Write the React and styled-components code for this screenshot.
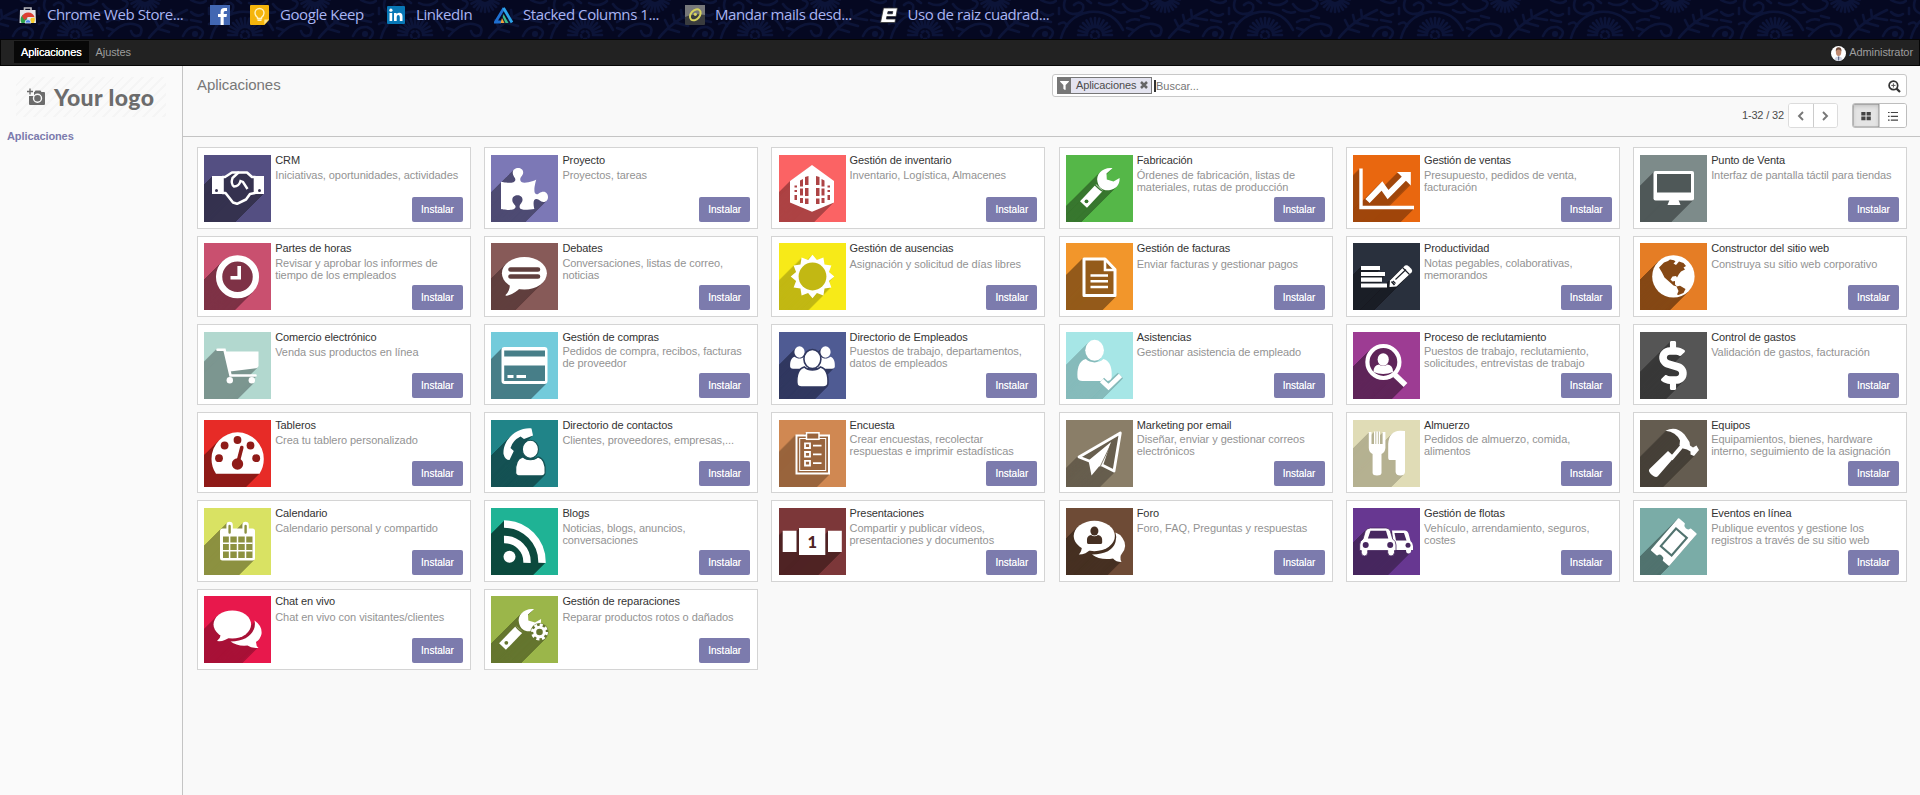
import React from "react";
import styled, { createGlobalStyle } from "styled-components";
import { FaPuzzlePiece, FaDollarSign, FaFilter } from "react-icons/fa";

const GlobalStyle = createGlobalStyle`
  * { box-sizing: border-box; }
  html, body { margin: 0; height: 100%; overflow: hidden; }
  body { background: #f9f9f9; font-family: "Liberation Sans", Arial, sans-serif; font-size: 11px; color: #4c4c4c; }
`;

const Page = styled.div`
  display: flex;
  flex-direction: column;
  height: 795px;
  overflow: hidden;
`;

/* ---------- bookmarks ---------- */
const BookmarkBar = styled.div`
  position: relative;
  height: 39px;
  flex: none;
  background: #050821;
  overflow: hidden;
`;
const Backdrop = styled.svg`
  position: absolute;
  inset: 0;
  width: 100%;
  height: 39px;
`;
const BookmarkList = styled.div`
  position: relative;
  display: flex;
  align-items: center;
  height: 30px;
  padding-left: 18px;
`;
const Bookmark = styled.div`
  display: flex;
  align-items: center;
  flex: none;
  width: ${(p) => p.$width}px;
  height: 30px;
`;
const BookmarkIcon = styled.svg`
  width: 20px;
  height: 20px;
  margin-right: ${(p) => p.$gap}px;
  flex: none;
`;
const BookmarkLabel = styled.span`
  font-family: "Open Sans", "Noto Sans", sans-serif;
  font-size: 15px;
  line-height: 20px;
  margin-top: -3px;
  letter-spacing: -0.42px;
  color: #a9b5f3;
  white-space: nowrap;
`;

/* ---------- navigation ---------- */
const NavBar = styled.nav`
  display: flex;
  align-items: center;
  flex: none;
  height: 27px;
  padding: 0 6px 0 13px;
  background: #222;
  border: 1px solid #050505;
`;
const NavItem = styled.a`
  height: 22px;
  line-height: 22px;
  padding: 0 7px;
  margin-top: -1px;
  letter-spacing: -0.1px;
  color: ${(p) => (p.$active ? "#fff" : "#9d9d9d")};
  background: ${(p) => (p.$active ? "#080808" : "transparent")};
  text-shadow: ${(p) => (p.$active ? "0 0 0.6px #fff" : "none")};
`;
const UserMenu = styled.div`
  display: flex;
  align-items: center;
  gap: 3px;
  margin-left: auto;
  color: #9d9d9d;
`;
const Avatar = styled.svg`
  width: 15px;
  height: 15px;
  margin-top: 1px;
`;
const UserName = styled.span`
  line-height: 22px;
  margin-top: -2px;
  letter-spacing: -0.08px;
`;

/* ---------- layout ---------- */
const Body = styled.div`
  display: flex;
  flex: 1;
  min-height: 0;
`;
const Sidebar = styled.aside`
  width: 183px;
  flex: none;
  border-right: 1px solid #c4c4c4;
  background: #fafafa;
`;
const LogoBox = styled.div`
  display: flex;
  align-items: center;
  width: 150px;
  height: 40px;
  margin: 11px 0 0 16px;
  padding-left: 11px;
  background: repeating-linear-gradient(135deg, #fafafa 0 5px, #f5f5f5 5px 7px);
`;
const LogoText = styled.span`
  font-family: Lato, sans-serif;
  font-weight: 900;
  font-size: 23px;
  letter-spacing: 0.4px;
  line-height: 28px;
  color: #6c6c6c;
  margin: 0 0 1px 8px;
  white-space: nowrap;
`;
const SideTitle = styled.div`
  margin: 12px 0 0 7px;
  line-height: 14px;
  font-weight: bold;
  letter-spacing: -0.1px;
  color: #7c7bad;
`;
const Main = styled.main`
  flex: 1;
  min-width: 0;
`;
const ControlPanel = styled.header`
  display: flex;
  justify-content: space-between;
  height: 71px;
  padding: 8px 13px 0 14px;
  border-bottom: 1px solid #c4c4c4;
`;
const Heading = styled.h1`
  margin: 2px 0 0;
  font-size: 15px;
  line-height: 18px;
  font-weight: normal;
  letter-spacing: -0.05px;
  color: #777;
`;
const Tools = styled.div`
  width: 855px;
`;
const SearchBox = styled.div`
  display: flex;
  align-items: center;
  height: 23px;
  padding: 0 4px;
  border: 1px solid #c8c8c8;
  border-radius: 3px;
  background: #fff;
`;
const Facet = styled.div`
  display: flex;
  align-items: center;
  height: 17px;
  margin-top: -1px;
  border: 1px solid #777;
  background: #e4e4f0;
  color: #4c4c4c;
`;
const FacetIcon = styled.span`
  display: flex;
  align-items: center;
  justify-content: center;
  width: 13px;
  height: 15px;
  margin-right: 5px;
  background: #777;
  color: #fff;
`;
const FacetLabel = styled.span`
  line-height: 15px;
  width: 63px;
  letter-spacing: -0.12px;
  white-space: nowrap;
`;
const FacetClose = styled.svg`
  width: 8px;
  height: 8px;
  margin: 0 3px 0 1px;
`;
const SearchInput = styled.span`
  flex: 1;
  margin-left: 2px;
  border-left: 2px solid #333;
  height: 12px;
  line-height: 13px;
  color: #777;
`;
const ZoomIcon = styled.svg`
  width: 13px;
  height: 13px;
  margin: 1px 1px 0 0;
`;
const PagerRow = styled.div`
  display: flex;
  align-items: center;
  justify-content: flex-end;
  margin-top: 6px;
  height: 25px;
`;
const PagerText = styled.span`
  margin: -1px 4px 0 0;
  letter-spacing: -0.15px;
`;
const ButtonGroup = styled.div`
  display: flex;
  height: 25px;
  margin-left: ${(p) => p.$gap || 0}px;
  border: 1px solid ${(p) => p.$tone};
  border-radius: 3px;
  background: #fff;
  overflow: hidden;
`;
const ToolButton = styled.button`
  display: flex;
  align-items: center;
  justify-content: center;
  width: ${(p) => p.$width}px;
  padding: 0;
  border: 0;
  border-left: ${(p) => (p.$divided ? "1px solid #ccc" : "0")};
  background: ${(p) => (p.$active ? "#e4e4e4" : "#fff")};
  box-shadow: ${(p) => (p.$active ? "inset 0 2px 4px rgba(0,0,0,.16), inset 0 0 0 0.5px #999" : "none")};
`;
const ToolGlyph = styled.svg`
  width: 12px;
  height: 12px;
`;

/* ---------- app cards ---------- */
const CardGrid = styled.section`
  display: grid;
  grid-template-columns: repeat(6, 274px);
  grid-auto-rows: 81.3px;
  column-gap: 13.2px;
  row-gap: 6.95px;
  padding: 10.45px 0 0 14px;
`;
const Card = styled.article`
  display: flex;
  border: 1px solid #d4d4d4;
  background: #fff;
  padding: 6.6px 7px 0 6.2px;
`;
const Tile = styled.svg`
  width: 67px;
  height: 67px;
  flex: none;
`;
const Info = styled.div`
  display: flex;
  flex-direction: column;
  flex: 1;
  min-width: 0;
  padding-left: 4px;
  height: 66.6px;
`;
const AppName = styled.div`
  font-size: 11px;
  line-height: 13px;
  letter-spacing: -0.1px;
  margin-top: -1px;
  color: #333;
  white-space: nowrap;
`;
const AppSummary = styled.div`
  font-size: 11px;
  line-height: 12px;
  letter-spacing: -0.06px;
  margin-top: ${(p) => (p.$wrapped ? 1.6 : 2.4)}px;
  color: #939393;
  white-space: pre;
`;
const InstallButton = styled.button`
  align-self: flex-end;
  margin-top: auto;
  width: 51px;
  height: 25px;
  padding: 0;
  border: 0;
  border-radius: 2px;
  background: #7c7bad;
  color: #fff;
  font: 10px/25px "Liberation Sans", Arial, sans-serif;
  text-shadow: 0 0 0.5px rgba(255, 255, 255, 0.7);
`;

/* ---------- glyphs, drawn in a 67 x 67 box; d is the dark cut-out colour ---------- */
const person = (x, y, s) => (
  <g transform={`translate(${x} ${y}) scale(${s})`}>
    <ellipse cx="0" cy="-10" rx="8.5" ry="9.5" />
    <path d="M-8 -2 C-15 0 -16 8 -15.5 15 Q-15 18 -11 18 H11 Q15 18 15.5 15 C16 8 15 0 8 -2 C4 2 -4 2 -8 -2Z" />
  </g>
);
const wrenchHead = "M46.5 13.2 C37 12 29.5 19 31.5 27 C33 33.5 38 36 43 35.2 C49 34.5 54 30.5 53.6 23 L47.5 26.5 L40.8 24.5 L40.5 18.5 Z";

const glyphs = {
  crm: (d) => (
    <>
      <path d="M18.5 22 H21 L28 17.5 H43 L48 22 H51 V38 L46 39 L42 44.5 L33 48.8 L29 47.5 L21.5 38 H18.5Z" fill={d} stroke="currentColor" strokeWidth="2.6" strokeLinejoin="round" />
      <path d="M8 21 H18.5 V39 H8Z M51 21 H60 V39 H51Z" />
      <path d="M35 17 L28.5 23 Q26.5 29 30 31.5 Q35 31.5 36.5 26 L39 27 L43.5 34" fill="none" stroke="currentColor" strokeWidth="2.4" />
      <circle cx="12.5" cy="35.5" r="1.5" fill={d} />
      <circle cx="55.5" cy="35.5" r="1.5" fill={d} />
    </>
  ),
  puzzle: () => <FaPuzzlePiece x="10" y="10.5" size={47} />,
  stock: (d) => (
    <>
      <path d="M33 10 L55 26 V47.5 L33 56.7 L11 47.5 V26Z" />
      <path d="M26 22 L29.5 21 V30 H26Z M37 21 L40.5 22 V30 H37Z M21 25.5 L24 24 V31.5 H21Z M42.5 24 L45.5 25.5 V31.5 H42.5Z M26 33 H29.5 V41 H26Z M37 33 H40.5 V41 H37Z M21 33.5 H24 V40.5 H21Z M42.5 33.5 H45.5 V40.5 H42.5Z M26 43.5 H29.5 V49 H26Z M37 43.5 H40.5 V49 H37Z M21 43 H24 V48 H21Z M42.5 43 H45.5 V48 H42.5Z M15.5 30.5 H18 V32.5 H15.5Z M15.5 35 H18 V37 H15.5Z M15.5 40 H18 V45 H15.5Z M48.5 30.5 H51 V32.5 H48.5Z M48.5 35 H51 V37 H48.5Z M48.5 40 H51 V45 H48.5Z" fill={d} />
    </>
  ),
  wrench: (d) => (
    <>
      <path d={wrenchHead} />
      <path d="M17.5 49.5 L33.5 32.5" stroke="currentColor" strokeWidth="9.5" strokeLinejoin="round" />
      <path d="M28.5 29.5 Q34 35 37 36.5" fill="none" stroke={d} strokeWidth="1.3" />
      <circle cx="20.5" cy="46.3" r="1.9" fill={d} />
    </>
  ),
  sales: () => (
    <>
      <path d="M8 13.5 V52.5 H61" fill="none" stroke="currentColor" strokeWidth="3.4" />
      <path d="M14.5 46 L29 31 L35 39.5 L52 22.5" fill="none" stroke="currentColor" strokeWidth="6" />
      <path d="M44 17 H57.8 V30.5Z" />
    </>
  ),
  monitor: (d) => (
    <>
      <rect x="13.5" y="16" width="40.5" height="29.5" rx="2" />
      <path d="M29.5 45 H38.5 L40.5 50 H27.5Z" />
      <rect x="17" y="19" width="34" height="18.5" fill={d} />
    </>
  ),
  clock: (d) => (
    <>
      <circle cx="33.5" cy="33.7" r="18.4" fill={d} stroke="currentColor" strokeWidth="6.3" />
      <path d="M35.2 23 V34.8 H26.5" fill="none" stroke="currentColor" strokeWidth="3.6" />
    </>
  ),
  talk: (d) => (
    <>
      <ellipse cx="33.4" cy="30.2" rx="22.5" ry="16.2" />
      <path d="M19 41 Q19 48 14.5 52 Q14 53 16 52.8 Q25 50 30 44Z" />
      <path d="M19.5 26.5 H47 M19.5 33.5 H47" stroke={d} strokeWidth="4.6" strokeLinecap="round" />
    </>
  ),
  sun: (d) => {
    const pts = [];
    for (let i = 0; i < 24; i++) {
      const r = i % 2 ? 17 : 21.8;
      const a = (i * Math.PI) / 12;
      pts.push(`${(33.5 + r * Math.sin(a)).toFixed(2)},${(33.5 - r * Math.cos(a)).toFixed(2)}`);
    }
    return (
      <>
        <polygon points={pts.join(" ")} />
        <circle cx="33.5" cy="33.5" r="13.9" fill={d} />
      </>
    );
  },
  invoice: (d) => (
    <>
      <path d="M18 16 H39 L49 26.5 V52.5 H18Z" fill={d} stroke="currentColor" strokeWidth="3" strokeLinejoin="round" />
      <path d="M39 16 V27 H49" fill="none" stroke="currentColor" strokeWidth="2.6" />
      <path d="M24.5 32.5 H42 M24.5 38.2 H42 M24.5 44 H42" stroke="currentColor" strokeWidth="2.6" />
    </>
  ),
  notes: (d) => (
    <>
      <path d="M8 25 H27 M8 31 H32 M8 36.7 H29 M8 42.5 H34" stroke="currentColor" strokeWidth="4.2" />
      <path d="M36.5 44 L37 37.5 L52 22.5 Q54 21.5 56 23.5 L58.5 26 Q60 28 58.5 29.5 L43.5 43.5Z" />
      <path d="M49.5 24.5 L56.5 31.5 M40 38 L42.5 40.5 M42.5 36.5 L53 26.5" stroke={d} strokeWidth="1.1" />
      <path d="M38.5 38.5 L41.5 42" stroke={d} strokeWidth="1.6" />
    </>
  ),
  globe: (d) => (
    <>
      <circle cx="33.4" cy="33.4" r="21.2" />
      <path d="M19 24.5 L24 19.5 L28 18 L30 16.5 L34 17.2 L35.5 18.5 L33.5 20.5 L36 22 L39 18.5 L43.5 20 L46 23 L43.5 24.5 L45 26.5 L41 28.5 L39 31 L37 34.5 L36 33 L32.5 33.5 L30.5 36.5 L32.5 38.5 L35 38 L35 41.5 L37 43.5 L33.5 42.5 L29 38.5 L24.5 34.5 L22 29.5 L20.5 27Z M36.5 43.5 L40 42.8 L45.5 46 L43.5 50 L38.5 52 L37 51.5 L38.5 48Z" fill={d} />
    </>
  ),
  cart: () => (
    <>
      <path d="M13.5 17.8 H20.5 L26.5 43.5 H51.5" fill="none" stroke="currentColor" strokeWidth="2.6" strokeLinecap="round" />
      <path d="M21 19.5 H54.5 V34 Q54 36 52 36.3 L26 39.5Z" />
      <circle cx="25.8" cy="48.3" r="3.2" />
      <circle cx="47.8" cy="48.3" r="3.2" />
    </>
  ),
  card: (d) => (
    <>
      <rect x="10.5" y="15" width="46" height="37" rx="3" />
      <path d="M13.2 18.5 H54 V24.5 H13.2Z M13.2 33.5 H54 V49 H13.2Z" fill={d} />
      <path d="M16.5 44.5 H22.5 M25.5 44.5 H35" stroke="currentColor" strokeWidth="3" />
    </>
  ),
  team: (d) => (
    <>
      {person(20.5, 26, 0.6)}
      {person(46.5, 26, 0.6)}
      <g stroke={d} strokeWidth="1.6">{person(33.4, 37, 1)}</g>
    </>
  ),
  attend: (d) => (
    <>
      {person(28.6, 29.3, 1.1)}
      <path d="M35.5 48.5 L42.5 55 L54.5 43.5" fill="none" stroke={d} strokeWidth="7.5" />
      <path d="M35.5 48.5 L42.5 55 L54.5 43.5" fill="none" stroke="currentColor" strokeWidth="4.6" />
    </>
  ),
  recruit: (d) => (
    <>
      <circle cx="30.4" cy="30" r="16" fill={d} stroke="currentColor" strokeWidth="4.2" />
      <ellipse cx="30.2" cy="27.5" rx="5.6" ry="6.3" />
      <path d="M20.5 40 Q20.5 33 26 32.5 Q30 35.5 34.5 32.5 Q40 33 40 40 Q30 44 20.5 40Z" />
      <path d="M42 43 L52.5 53" stroke="currentColor" strokeWidth="5.5" />
    </>
  ),
  dollar: () => <FaDollarSign x="8.5" y="9" size={49} />,
  gauge: (d) => (
    <>
      <path d="M12 53.7 Q7.5 47 7.5 39 A26 26.5 0 0 1 59.8 39 Q59.8 47 55.5 53.7Z" />
      <g fill={d}>
        <circle cx="33.5" cy="20" r="3.9" />
        <circle cx="20.6" cy="25.5" r="3.9" />
        <circle cx="46.5" cy="25.5" r="3.9" />
        <circle cx="15" cy="38.2" r="3.9" />
        <circle cx="52.2" cy="38.2" r="3.9" />
        <circle cx="33.5" cy="44" r="5.7" />
      </g>
      <path d="M33.8 43 L37.8 27.5" stroke={d} strokeWidth="3.6" strokeLinecap="round" />
    </>
  ),
  contact: (d) => (
    <>
      <path d="M40.5 8.5 C27 7 11.5 19 12.5 34 Q14 40 18.5 40 L22.8 31 L19.5 28 Q21.5 20.5 29.5 16.5 L33 19 L42 15.5Z" />
      <g stroke={d} strokeWidth="1.2">{person(39.4, 38.8, 0.95)}</g>
    </>
  ),
  survey: (d) => (
    <>
      <rect x="17.5" y="15.5" width="32.5" height="38" fill={d} stroke="currentColor" strokeWidth="2" />
      <rect x="20.7" y="18.5" width="26" height="32" fill="none" stroke="currentColor" strokeWidth="1" />
      <rect x="27.5" y="12.8" width="12.5" height="6.5" fill={d} stroke="currentColor" strokeWidth="1.5" />
      <g fill="none" stroke="currentColor" strokeWidth="1.8">
        <path d="M26 23.3 H31 V28 H26Z M26 32 H31 V36.7 H26Z M26 40.8 H31 V45.5 H26Z M34 25.7 H42.5 M34 34.3 H42.5 M34 43.2 H42.5" />
      </g>
    </>
  ),
  plane: (d) => (
    <>
      <path d="M54.3 13 L13 37 L24.5 41.5 L37 45.5 L48 51Z" fill={d} stroke="currentColor" strokeWidth="2.8" strokeLinejoin="round" />
      <path d="M45 22 L22.5 40.5 L25.5 55.5 L33 46.5 L37 45.5Z" />
      <path d="M45 24 L34.5 46" stroke={d} strokeWidth="0.8" />
    </>
  ),
  meal: (d) => (
    <>
      <path d="M15.8 12 H18.5 V24 H21 V11.5 H27 V24 H29.6 V12 H32.4 V28 Q32 32.5 28.5 34 V53 Q28.3 55.5 24 55.5 Q19.8 55.5 19.6 53 V34 Q16 32.5 15.8 28Z" />
      <path d="M22.8 11.5 V24 M25.4 11.5 V24" stroke={d} strokeWidth="0.8" />
      <path d="M52 11 V52 Q51.6 55.5 47.5 55.5 Q43 55.5 42.6 52 V40 H36.5 Q35 40 35.2 36 V24 Q36 11 47 10.8Z" />
    </>
  ),
  hammer: () => (
    <>
      <path d="M25.5 10.8 Q36 5.5 44.5 14.5 L49.5 22 L50 25.5 L53 27.5 L56.5 25.5 L59 30 L54 36 L50.5 34.5 L50.5 31.5 L47 29.5 L43 28.5 L39.5 25 L40 20.5 Q36 12 25.5 10.8Z" />
      <path d="M42 26 L31 39" stroke="currentColor" strokeWidth="4" />
      <path d="M28 31 L34.5 37 L18 56 Q16 58.5 12 55 Q7.5 51 9.5 49Z" />
    </>
  ),
  calendar: (d) => (
    <>
      <rect x="16" y="20.5" width="35" height="32" rx="2.5" />
      <path d="M25.6 17 V26 M41.6 17 V26" stroke="currentColor" strokeWidth="6.4" strokeLinecap="round" />
      <path d="M25.6 18 V24.5 M41.6 18 V24.5" stroke={d} strokeWidth="2.4" strokeLinecap="round" />
      <path d="M19 28.5 H48.5 V50 H19Z" fill={d} />
      <path d="M19 35.2 H48.5 M19 42.8 H48.5 M25.6 28 V50.5 M33.5 28 V50.5 M41.5 28 V50.5" stroke="currentColor" strokeWidth="1.5" />
    </>
  ),
  rss: () => (
    <>
      <circle cx="18.5" cy="48.8" r="6" />
      <path d="M13 31.5 A22.5 22.5 0 0 1 36 54.8 M13 16 A38 38 0 0 1 51 54.8" fill="none" stroke="currentColor" strokeWidth="7.4" />
    </>
  ),
  slides: (d) => (
    <>
      <path d="M3.7 22.7 H17.5 V44 H3.7Z M20 20 H46.3 V47 H20Z M49 22.7 H62.8 V44 H49Z" />
      <text x="33.3" y="39.5" textAnchor="middle" fontFamily="Lato, sans-serif" fontWeight="900" fontSize="16.5" fill={d}>1</text>
    </>
  ),
  forum: (d) => (
    <>
      <path d="M56.5 30 Q62 38 56 45.5 Q53 49 55.5 54 Q50 54 47 50.5 Q34 52.5 26 46.5 Q46 46 49.5 34 Q51 29 49.5 24.5 Q54 26 56.5 30Z" />
      <ellipse cx="28.3" cy="28" rx="20.6" ry="15.2" />
      <path d="M16 38 Q16 43 12.8 46.5 Q20 46.5 25 41Z" />
      <g fill={d}>
        <ellipse cx="28.4" cy="23" rx="4" ry="4.6" />
        <path d="M21 34.5 Q20 27.5 25 27 Q28.4 29.5 32 27 Q37 27.5 36.2 34.5 Q36 36 34.5 36 H22.5 Q21.2 36 21 34.5Z" />
      </g>
    </>
  ),
  fleet: (d) => (
    <>
      <path d="M39 22.5 H51.5 Q54.5 22.5 55.5 25.5 L57.5 33 Q60 35 60 38 V42 H58.3 Q58 45.5 55.5 45.5 Q53 45.5 53 42 H41Z" />
      <path d="M41.5 25 H51 L53.5 32.5 H43Z" fill={d} />
      <circle cx="55" cy="37.3" r="2.5" fill={d} />
      <path d="M17.5 20 H33 Q36.5 20 37.5 23.5 L39.7 31 Q43 33 43 37 V42.5 H41.5 V44.5 Q41 48 38 48 Q35 48 34.7 44.5 V42.5 H14.7 V44.5 Q14.5 48 11.5 48 Q8.5 48 8.3 44.5 V42.5 H6.7 V37 Q6.7 33 10 31 L12.2 23.5 Q13.5 20 17.5 20Z" stroke={d} strokeWidth="0.8" />
      <path d="M17.5 22.8 H33 L35.3 30.5 H14.9Z" fill={d} />
      <circle cx="12.7" cy="37" r="3" fill={d} />
      <circle cx="37.2" cy="37" r="3" fill={d} />
    </>
  ),
  ticket: (d) => (
    <g transform="translate(33.8 34) rotate(-49) scale(.93 .98)">
      <path d="M-22 -11.5 H22 V-4.5 Q18.5 -4 18.5 0 Q18.5 4 22 4.5 V11.5 H-22 V4.5 Q-18.5 4 -18.5 0 Q-18.5 -4 -22 -4.5Z" strokeLinejoin="round" stroke="currentColor" strokeWidth="2" />
      <path d="M-12.5 -7.3 H12.5 V7.3 H-12.5Z" fill="none" stroke={d} strokeWidth="2.2" />
    </g>
  ),
  chat: (d) => (
    <>
      <path d="M50.5 24.5 Q58.5 30 57.5 38 Q56.5 43 52 46 Q52 50 54.5 52 Q47 52 43.5 49.5 Q33 50.5 26.5 45.5 Q45 45 50 33 Q51.5 29 50.5 24.5Z" />
      <ellipse cx="28.3" cy="28.5" rx="18.8" ry="14" />
      <path d="M17 38 Q16.5 42 13 45 Q20 46 26 41Z" />
    </>
  ),
  repair: (d) => (
    <>
      <path d={wrenchHead} transform="translate(-3.5 0)" />
      <path d="M11.5 50.5 L28.5 33" stroke="currentColor" strokeWidth="9.5" />
      <path d="M24.5 30 Q29 36 33.5 37" fill="none" stroke={d} strokeWidth="1.3" />
      <circle cx="15.3" cy="46.8" r="1.9" fill={d} />
      <circle cx="48.5" cy="36" r="9" fill={d} />
      <circle cx="48.5" cy="36" r="4.8" fill="none" stroke="currentColor" strokeWidth="3" />
      <circle cx="48.5" cy="36" r="7" fill="none" stroke="currentColor" strokeWidth="3" strokeDasharray="3 2.5" />
    </>
  ),
};

const SHADOW_STEPS = Array.from({ length: 62 }, (_, i) => i + 1);

function AppTile({ kind, bg, dark }) {
  const draw = glyphs[kind];
  return (
    <Tile viewBox="0 0 67 67" preserveAspectRatio="none">
      <defs>
        <g id={`s-${kind}`} fill="currentColor">{draw("currentColor")}</g>
      </defs>
      <rect width="67" height="67" fill={bg} />
      <g color={dark}>
        {SHADOW_STEPS.map((n) => (
          <use key={n} href={`#s-${kind}`} x={-n} y={n} />
        ))}
      </g>
      <g color="#fff" fill="currentColor">{draw(dark)}</g>
    </Tile>
  );
}

const apps = [
  ["crm", "#544f82", "#35324f", "CRM", "Iniciativas, oportunidades, actividades"],
  ["puzzle", "#7c78b6", "#4e4b73", "Proyecto", "Proyectos, tareas"],
  ["stock", "#fb6364", "#ad4344", "Gestión de inventario", "Inventario, Logística, Almacenes"],
  ["wrench", "#55b748", "#38772f", "Fabricación", "Órdenes de fabricación, listas de\nmateriales, rutas de producción"],
  ["sales", "#e9670f", "#a0460b", "Gestión de ventas", "Presupuesto, pedidos de venta,\nfacturación"],
  ["monitor", "#7d8b8a", "#4f5858", "Punto de Venta", "Interfaz de pantalla táctil para tiendas"],
  ["clock", "#c9506f", "#7e3246", "Partes de horas", "Revisar y aprobar los informes de\ntiempo de los empleados"],
  ["talk", "#875a58", "#603f3e", "Debates", "Conversaciones, listas de correo,\nnoticias"],
  ["sun", "#f7ea18", "#c2b813", "Gestión de ausencias", "Asignación y solicitud de días libres"],
  ["invoice", "#f2962b", "#945b1a", "Gestión de facturas", "Enviar facturas y gestionar pagos"],
  ["notes", "#29303d", "#1a1e26", "Productividad", "Notas pegables, colaborativas,\nmemorandos"],
  ["globe", "#e57d25", "#854815", "Constructor del sitio web", "Construya su sitio web corporativo"],
  ["cart", "#b2d8cf", "#7c9690", "Comercio electrónico", "Venda sus productos en línea"],
  ["card", "#73cbdb", "#477e88", "Gestión de compras", "Pedidos de compra, recibos, facturas\nde proveedor"],
  ["team", "#4f5b93", "#313860", "Directorio de Empleados", "Puestos de trabajo, departamentos,\ndatos de empleados"],
  ["attend", "#a6e6e6", "#86bbbb", "Asistencias", "Gestionar asistencia de empleado"],
  ["recruit", "#9d3c93", "#5f2559", "Proceso de reclutamiento", "Puestos de trabajo, reclutamiento,\nsolicitudes, entrevistas de trabajo"],
  ["dollar", "#555555", "#383838", "Control de gastos", "Validación de gastos, facturación"],
  ["gauge", "#e72b27", "#8f1b18", "Tableros", "Crea tu tablero personalizado"],
  ["contact", "#208488", "#155254", "Directorio de contactos", "Clientes, proveedores, empresas,..."],
  ["survey", "#d08852", "#99643c", "Encuesta", "Crear encuestas, recolectar\nrespuestas e imprimir estadísticas"],
  ["plane", "#8a7e68", "#675e4e", "Marketing por email", "Diseñar, enviar y gestionar correos\nelectrónicos"],
  ["meal", "#e0dcb6", "#b5b191", "Almuerzo", "Pedidos de almuerzo, comida,\nalimentos"],
  ["hammer", "#645c50", "#464038", "Equipos", "Equipamientos, bienes, hardware\ninterno, seguimiento de la asignación"],
  ["calendar", "#d9e263", "#8c9140", "Calendario", "Calendario personal y compartido"],
  ["rss", "#1fb395", "#0c4a3e", "Blogs", "Noticias, blogs, anuncios,\nconversaciones"],
  ["slides", "#7c3739", "#4f2324", "Presentaciones", "Compartir y publicar vídeos,\npresentaciones y documentos"],
  ["forum", "#6e4b36", "#463022", "Foro", "Foro, FAQ, Preguntas y respuestas"],
  ["fleet", "#673791", "#47275f", "Gestión de flotas", "Vehículo, arrendamiento, seguros,\ncostes"],
  ["ticket", "#7aaca7", "#51736f", "Eventos en línea", "Publique eventos y gestione los\nregistros a través de su sitio web"],
  ["chat", "#e8184c", "#a81137", "Chat en vivo", "Chat en vivo con visitantes/clientes"],
  ["repair", "#9bb64a", "#65762f", "Gestión de reparaciones", "Reparar productos rotos o dañados"],
];

/* ---------- bookmark favicons, 20 x 20 ---------- */
const favicons = {
  store: (
    <>
      <path d="M6.5 6 V3 H13 V6" fill="none" stroke="#b9b9bd" strokeWidth="1.6" />
      <path d="M2 5 H17.5 L18 18 H1.5Z" fill="#e6e6e8" />
      <path d="M3.5 18 A7 7 0 0 1 5 9.5 L9.5 14 L8 18Z" fill="#2fa14b" />
      <path d="M4 11.5 A6.8 6.8 0 0 1 16.5 12 H10 L6.5 15Z" fill="#dd4033" />
      <path d="M16.7 12.5 Q17.5 15 16 18 H11 L13 13Z" fill="#f8cc2c" />
      <path d="M7 18 A3 3.4 0 0 1 13 18Z" fill="#4a86e8" stroke="#fff" strokeWidth="0.7" />
    </>
  ),
  facebook: (
    <>
      <rect width="20" height="20" fill="#4267b2" />
      <path d="M10.6 20 V12 H8 V9 H10.6 V6.8 Q10.6 3 14.2 3 H17 V6 H15 Q13.7 6 13.7 7.5 V9 H17 L16.5 12 H13.7 V20Z" fill="#fff" />
    </>
  ),
  keep: (
    <>
      <path d="M1 0 H18 Q19 0 19 1 V15 L14.5 20 H1 Q0 20 0 19 V1 Q0 0 1 0Z" fill="#f5b50c" />
      <path d="M19 14.5 L14.3 19.5 V14.5Z" fill="#ffe48a" />
      <path d="M7.5 12.5 Q5 10.5 5 8 A4.5 4.5 0 0 1 14 8 Q14 10.5 11.5 12.5 V13.5 H7.5Z M7.5 15.3 H11.5" fill="none" stroke="#fff2bf" strokeWidth="1.4" />
    </>
  ),
  linkedin: (
    <>
      <rect x="1" y="1" width="18" height="18" rx="1" fill="#0877b5" />
      <path d="M3.5 8 H6.2 V16 H3.5Z M8 8 H10.6 V9.2 Q11.5 7.8 13.4 7.8 Q16.5 7.8 16.5 11.5 V16 H13.8 V12 Q13.8 10 12.2 10 Q10.7 10 10.7 12 V16 H8Z" fill="#fff" />
      <circle cx="4.9" cy="5.2" r="1.6" fill="#fff" />
    </>
  ),
  stacked: (
    <>
      <path d="M10 3 L1.5 17 H7" fill="none" stroke="#1f6fd0" strokeWidth="2.8" />
      <path d="M9.5 3 L18 17.5" stroke="#2ca3ea" strokeWidth="2.8" />
      <path d="M9.5 9 L14.5 18 H11.5 L8.7 12Z" fill="#3dbb8a" />
      <path d="M8 13 L10.5 18 H6.5Z" fill="#f0a13a" />
    </>
  ),
  mandar: (
    <>
      <rect width="20" height="20" rx="1" fill="#3a3c3e" />
      <path d="M0 0 H20 V10 Q8 8 0 12Z" fill="#77787a" />
      <ellipse cx="10.3" cy="9.8" rx="6.3" ry="4.4" transform="rotate(-48 10.3 9.8)" fill="none" stroke="#d8d35e" strokeWidth="2" />
      <circle cx="10.3" cy="9.3" r="1.6" fill="#d8d35e" />
    </>
  ),
  uso: (
    <path d="M4.5 3 H18.5 L17 11.5 H7.8 L7.4 14 H16.5 L16 17.5 H1.5Z M9 6.5 L8.6 8.8 H13.4 L13.8 6.5Z" fillRule="evenodd" fill="#fff" stroke="#333" strokeWidth="0.8" />
  ),
};

const bookmarks = [
  { icon: "store", label: "Chrome Web Store...", width: 192, gap: 9 },
  { icon: "facebook", label: "", width: 40, gap: 0 },
  { icon: "keep", label: "Google Keep", width: 136, gap: 10 },
  { icon: "linkedin", label: "LinkedIn", width: 108, gap: 10 },
  { icon: "stacked", label: "Stacked Columns 1...", width: 191, gap: 9 },
  { icon: "mandar", label: "Mandar mails desd...", width: 193.5, gap: 10 },
  { icon: "uso", label: "Uso de raiz cuadrad...", width: 200, gap: 9 },
];

const fan = (cx, cy, r0, r1, from, to, step) => {
  let d = "";
  for (let a = from; a <= to; a += step) {
    const t = (a * Math.PI) / 180;
    d += `M${(cx + r0 * Math.cos(t)).toFixed(1)} ${(cy - r0 * Math.sin(t)).toFixed(1)}L${(cx + r1 * Math.cos(t)).toFixed(1)} ${(cy - r1 * Math.sin(t)).toFixed(1)}`;
  }
  return d;
};

function FloralBackdrop() {
  return (
    <Backdrop>
      <defs>
        <pattern id="floral" width="170" height="39" patternUnits="userSpaceOnUse" x="37">
          <g fill="none" stroke="#0c1438" strokeWidth="2.5" strokeLinecap="round">
            <path d={fan(38, 35, 8, 17, 0, 180, 15)} />
            <circle cx="38" cy="35" r="4" strokeDasharray="2 3" />
            <path d="M4 38 Q10 16 32 12 Q56 10 66 30 M8 0 Q4 12 16 14 Q28 14 26 5 Q22 0 17 5" />
            <path d={fan(108, -3, 6, 15, 190, 350, 16)} />
            <path d="M72 36 Q84 22 96 24 Q108 26 103 35 Q96 38 94 31 M66 4 Q74 16 88 8 Q94 2 86 0" />
            <path d="M112 38 Q124 22 150 10 M122 28 L118 20 M128 23 L126 15 M135 18 L134 10 M122 29 L132 32 M130 23 L141 26 M138 18 L150 20" />
            <path d="M146 36 Q150 26 160 27 Q170 31 163 38 M154 0 Q164 6 170 0 M42 3 Q52 8 60 1 M34 3 L30 0" />
            <path d="M70 22 Q76 18 82 20 M2 24 Q8 20 10 26 M56 10 Q62 14 68 12 M154 12 Q160 18 166 14 M76 30 L70 28 M84 16 L92 18 M2 8 L2 14 M154 20 L164 22" />
          </g>
          <circle cx="158" cy="34" r="3" fill="#0c1438" />
        </pattern>
      </defs>
      <rect width="100%" height="39" fill="url(#floral)" />
    </Backdrop>
  );
}

export default function App() {
  return (
    <Page>
      <GlobalStyle />
      <BookmarkBar>
        <FloralBackdrop />
        <BookmarkList>
          {bookmarks.map((b) => (
            <Bookmark key={b.icon} $width={b.width}>
              <BookmarkIcon viewBox="0 0 20 20" $gap={b.gap}>{favicons[b.icon]}</BookmarkIcon>
              {b.label && <BookmarkLabel>{b.label}</BookmarkLabel>}
            </Bookmark>
          ))}
        </BookmarkList>
      </BookmarkBar>

      <NavBar>
        <NavItem $active>Aplicaciones</NavItem>
        <NavItem>Ajustes</NavItem>
        <UserMenu>
          <Avatar viewBox="0 0 15 15">
            <circle cx="7.5" cy="7.5" r="7.5" fill="#fff" />
            <path d="M3.5 13.6 Q4 10.5 7.5 10.5 Q11 10.5 11.5 13.6 Q7.5 16 3.5 13.6Z" fill="#cdd3e2" />
            <ellipse cx="7.6" cy="6" rx="2.7" ry="3.9" fill="#c08a70" />
            <path d="M4.8 5.5 Q4.5 1.3 7.6 1.3 Q10.8 1.3 10.4 5.5 Q9.5 3.6 7.6 3.6 Q5.7 3.6 4.8 5.5Z" fill="#6d4a3a" />
            <path d="M7 10.5 H8.3 L8 14.5 H7.3Z" fill="#555c7c" />
          </Avatar>
          <UserName>Administrator</UserName>
        </UserMenu>
      </NavBar>

      <Body>
        <Sidebar>
          <LogoBox>
            <svg width="19" height="18" viewBox="0 0 19 18">
              <path d="M0 3.5 H6 M3 0.5 V6.5" stroke="#6c6c6c" strokeWidth="1.4" />
              <path d="M7.5 4 L8.5 2.5 H13.5 L14.5 4 H17 Q18 4 18 5 V16 Q18 17 17 17 H3 Q2 17 2 16 V8 H7 V4Z" fill="#6c6c6c" />
              <circle cx="10.5" cy="10.3" r="4" fill="none" stroke="#fafafa" strokeWidth="1.4" />
            </svg>
            <LogoText>Your logo</LogoText>
          </LogoBox>
          <SideTitle>Aplicaciones</SideTitle>
        </Sidebar>

        <Main>
          <ControlPanel>
            <Heading>Aplicaciones</Heading>
            <Tools>
              <SearchBox>
                <Facet>
                  <FacetIcon><FaFilter size={9} /></FacetIcon>
                  <FacetLabel>Aplicaciones</FacetLabel>
                  <FacetClose viewBox="0 0 8 8">
                    <path d="M1 1 L7 7 M7 1 L1 7" stroke="#666" strokeWidth="2.5" />
                  </FacetClose>
                </Facet>
                <SearchInput>Buscar...</SearchInput>
                <ZoomIcon viewBox="0 0 13 13">
                  <circle cx="5.4" cy="5.4" r="4.3" fill="none" stroke="#333" strokeWidth="1.7" />
                  <path d="M8.6 8.6 L12 12" stroke="#333" strokeWidth="2.2" />
                  <path d="M3.3 5.4 H7.5 M5.4 3.3 V7.5" stroke="#555" strokeWidth="1" />
                </ZoomIcon>
              </SearchBox>
              <PagerRow>
                <PagerText>1-32 / 32</PagerText>
                <ButtonGroup $tone="#dcdcdc">
                  <ToolButton $width={23.5}>
                    <ToolGlyph viewBox="0 0 12 12"><path d="M8 2 L4 6 L8 10" fill="none" stroke="#777" strokeWidth="1.9" /></ToolGlyph>
                  </ToolButton>
                  <ToolButton $width={24} $divided>
                    <ToolGlyph viewBox="0 0 12 12"><path d="M4 2 L8 6 L4 10" fill="none" stroke="#777" strokeWidth="1.9" /></ToolGlyph>
                  </ToolButton>
                </ButtonGroup>
                <ButtonGroup $tone="#bdbdbd" $gap={14.5}>
                  <ToolButton $width={26} $active>
                    <ToolGlyph viewBox="0 0 12 12"><path d="M1.3 2 H5.5 V5.6 H1.3Z M6.6 2 H10.8 V5.6 H6.6Z M1.3 6.6 H5.5 V10.2 H1.3Z M6.6 6.6 H10.8 V10.2 H6.6Z" fill="#444" /></ToolGlyph>
                  </ToolButton>
                  <ToolButton $width={27} $divided>
                    <ToolGlyph viewBox="0 0 12 12"><path d="M1 2.5 H2.6 M1 6.3 H2.6 M1 10.1 H2.6 M3.8 2.5 H11 M3.8 6.3 H11 M3.8 10.1 H11" stroke="#444" strokeWidth="1.2" /></ToolGlyph>
                  </ToolButton>
                </ButtonGroup>
              </PagerRow>
            </Tools>
          </ControlPanel>

          <CardGrid>
            {apps.map(([kind, bg, dark, name, summary]) => (
              <Card key={kind}>
                <AppTile kind={kind} bg={bg} dark={dark} />
                <Info>
                  <AppName>{name}</AppName>
                  <AppSummary $wrapped={summary.includes("\n")}>{summary}</AppSummary>
                  <InstallButton>Instalar</InstallButton>
                </Info>
              </Card>
            ))}
          </CardGrid>
        </Main>
      </Body>
    </Page>
  );
}
